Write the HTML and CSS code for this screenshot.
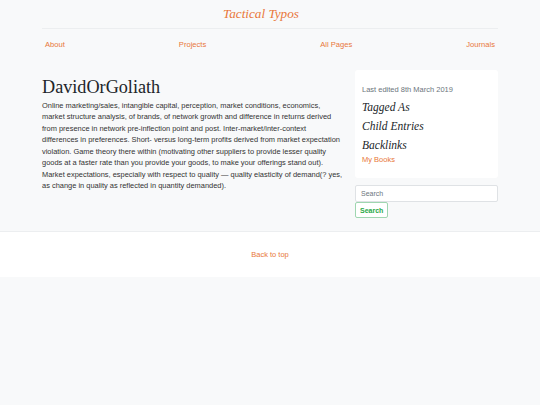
FILE: index.html
```html
<!DOCTYPE html>
<html>
<head>
<meta charset="utf-8">
<link rel="stylesheet" href="styles.css">
</head>
<body>
<div class="page">
  <header class="site-header">
    <div class="brand"><a href="#">Tactical Typos</a></div>
    <nav class="nav">
      <a href="#">About</a>
      <a href="#">Projects</a>
      <a href="#">All Pages</a>
      <a href="#">Journals</a>
    </nav>
  </header>
  <main class="content">
    <article class="entry">
      <h1>DavidOrGoliath</h1>
      <p>Online marketing/sales, intangible capital, perception, market conditions, economics, market structure analysis, of brands, of network growth and difference in returns derived from presence in network pre-inflection point and post. Inter-market/inter-context differences in preferences. Short- versus long-term profits derived from market expectation violation. Game theory there within (motivating other suppliers to provide lesser quality goods at a faster rate than you provide your goods, to make your offerings stand out). Market expectations, especially with respect to quality — quality elasticity of demand(? yes, as change in quality as reflected in quantity demanded).</p>
    </article>
    <aside class="sidebar">
      <div class="card">
        <div class="edited">Last edited 8th March 2019</div>
        <h3>Tagged As</h3>
        <h3>Child Entries</h3>
        <h3>Backlinks</h3>
        <a class="link" href="#">My Books</a>
      </div>
      <form class="search">
        <input type="text" placeholder="Search">
        <button type="button">Search</button>
      </form>
    </aside>
  </main>
</div>
<footer class="footer">
  <a href="#">Back to top</a>
</footer>
</body>
</html>
```

FILE: styles.css
```css
html, body {
  margin: 0;
  padding: 0;
  background: #f8f9fa;
  font-family: "Liberation Sans", Arial, sans-serif;
  color: #212529;
}
a {
  color: #e8773a;
  text-decoration: none;
}
.page {
  width: 456px;
  margin: 0 auto;
}
.site-header {
  padding-top: 6px;
}
.brand {
  text-align: center;
  font-family: "Liberation Serif", Georgia, serif;
  font-style: italic;
  font-size: 13.2px;
  line-height: 16px;
  padding: 0 18px 6px 0;
  border-bottom: 1px solid #eceef0;
}
.nav {
  display: flex;
  justify-content: space-between;
  padding: 11px 3px 0;
  font-size: 7.6px;
  line-height: 10px;
}
.content {
  display: grid;
  grid-template-columns: 1fr 143px;
  column-gap: 11px;
  margin-top: 20px;
  padding-bottom: 13px;
}
.entry h1 {
  margin: 6px 0 2px;
  font-family: "Liberation Serif", "Times New Roman", serif;
  font-weight: normal;
  font-size: 18.2px;
  line-height: 22px;
}
.entry p {
  margin: 0;
  font-size: 7.45px;
  line-height: 11.45px;
  color: #333;
}
.card {
  background: #fff;
  border-radius: 3px;
  padding: 15px 7px 13px;
}
.edited {
  font-size: 7.5px;
  line-height: 10px;
  color: #6c757d;
}
.card h3 {
  margin: 6px 0 0;
  font-family: "Liberation Serif", Georgia, serif;
  font-style: italic;
  font-weight: normal;
  font-size: 11.5px;
  line-height: 13px;
}
.card h3 + h3 {
  margin-top: 6px;
}
.link {
  display: block;
  margin-top: 3px;
  font-size: 7.5px;
  line-height: 10px;
}
.search {
  margin-top: 7px;
}
.search input {
  display: block;
  box-sizing: border-box;
  width: 100%;
  height: 17px;
  margin: 0;
  padding: 0 5px;
  border: 1px solid #dfe2e5;
  border-radius: 2px;
  background: #fff;
  font-family: "Liberation Sans", Arial, sans-serif;
  font-size: 7px;
  color: #495057;
}
.search input::placeholder {
  color: #6c757d;
}
.search button {
  display: block;
  box-sizing: border-box;
  height: 16px;
  padding: 0 4px;
  margin: 0;
  border: 1px solid #9fd6b0;
  border-radius: 2px;
  background: #fff;
  color: #28a745;
  font-family: "Liberation Sans", Arial, sans-serif;
  font-weight: bold;
  font-size: 7px;
}
.footer {
  background: #fff;
  border-top: 1px solid #eceef0;
  text-align: center;
  height: 45px;
  line-height: 45px;
  font-size: 7.5px;
}
```
